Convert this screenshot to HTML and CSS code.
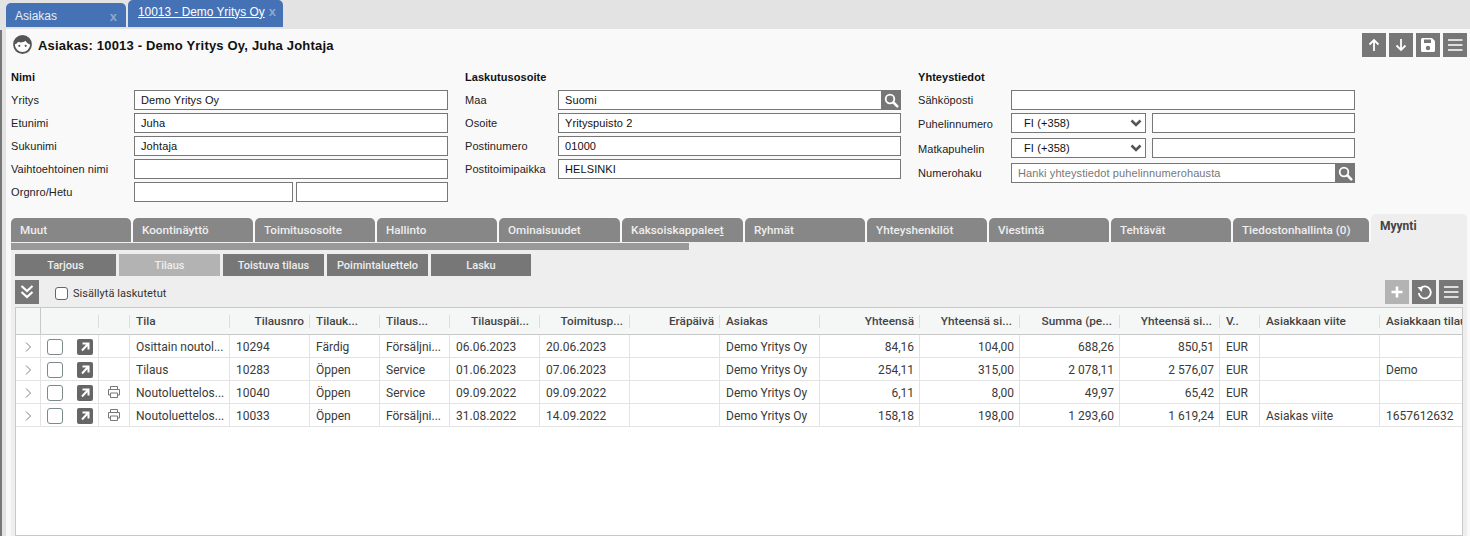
FILE: index.html
```html
<!DOCTYPE html>
<html lang="fi">
<head>
<meta charset="utf-8">
<title>Asiakas</title>
<link rel="stylesheet" href="styles.css">
</head>
<body>
<svg class="defs" width="0" height="0" aria-hidden="true">
  <symbol id="i-search" viewBox="0 0 20 20">
    <circle cx="9" cy="9" r="4.300" fill="none" stroke="#fff" stroke-width="1.800"/>
    <path d="M12.500 12.500l3.800 3.800" stroke="#fff" stroke-width="2.600" stroke-linecap="round"/>
  </symbol>
  <symbol id="i-menu" viewBox="0 0 24 24">
    <path d="M5 7h14.500M5 12h14.500M5 17h14.500" stroke="#fff" stroke-width="1.500" fill="none"/>
  </symbol>
  <symbol id="i-chev" viewBox="0 0 12 8">
    <path d="M1.500 1.500L6 6l4.500-4.500" fill="none" stroke="#555" stroke-width="2.600"/>
  </symbol>
  <symbol id="i-caret" viewBox="0 0 8 12">
    <path d="M2 1.500L6.500 6 2 10.500" fill="none" stroke="#7a8088" stroke-width="1"/>
  </symbol>
  <symbol id="i-open" viewBox="0 0 16 16">
    <rect width="16" height="16" rx="2" fill="#666"/>
    <path d="M5.500 4.500h6v6M11 5l-6 6.500" fill="none" stroke="#fff" stroke-width="2"/>
  </symbol>
  <symbol id="i-print" viewBox="0 0 14 14">
    <path d="M3.500 4.500V1.500h7v3M3.500 10H1.500V4.500h11V10h-2M3.500 8h7v4.500h-7z" fill="none" stroke="#777" stroke-width="1"/>
  </symbol>
</svg>

<nav class="doc-tabs">
  <div class="doc-tab"><span>Asiakas</span><span class="doc-close">x</span></div>
  <div class="doc-tab doc-tab-active"><span class="doc-link">10013 - Demo Yritys Oy</span><span class="doc-close">x</span></div>
</nav>

<div class="shell">
  <main class="main">
    <header class="head">
      <svg class="face" viewBox="0 0 19 19" width="19" height="19">
        <circle cx="9.500" cy="9.500" r="8.500" fill="#fff" stroke="#555" stroke-width="1.800"/>
        <path d="M1.500 9.500C2 3.500 6 1 9.500 1s7.500 2.500 8 8.500C15 9 13.200 7.500 12.700 5.800 10.500 7.800 6 7.800 5 6.800 4.500 8 3 9.200 1.500 9.500z" fill="#555"/>
        <circle cx="6.300" cy="10.800" r="1.100" fill="#555"/>
        <circle cx="12.700" cy="10.800" r="1.100" fill="#555"/>
      </svg>
      <h1 class="title">Asiakas: 10013 - Demo Yritys Oy, Juha Johtaja</h1>
      <div class="head-actions">
        <button class="sq"><svg viewBox="0 0 24 24" width="24" height="24"><path d="M12 18V7M7.500 11.500L12 7l4.500 4.500" fill="none" stroke="#fff" stroke-width="1.800"/></svg></button>
        <button class="sq"><svg viewBox="0 0 24 24" width="24" height="24"><path d="M12 6v11M7.500 12.500L12 17l4.500-4.500" fill="none" stroke="#fff" stroke-width="1.800"/></svg></button>
        <button class="sq"><svg viewBox="0 0 24 24" width="24" height="24"><path fill="#fff" fill-rule="evenodd" d="M6.500 5h9.500l3 3v9.500a1.500 1.500 0 0 1-1.500 1.500h-11A1.500 1.500 0 0 1 5 17.500v-11A1.500 1.500 0 0 1 6.500 5zM8 6.500V10h7V6.500zM12 12.800a2.200 2.200 0 1 0 0 4.400 2.200 2.200 0 0 0 0-4.400z"/></svg></button>
        <button class="sq"><svg width="24" height="24"><use href="#i-menu"/></svg></button>
      </div>
    </header>

    <section class="forms">
      <div class="fcol fcol-name">
        <h2 class="fhead">Nimi</h2>
        <div class="frow"><label>Yritys</label><div class="field">Demo Yritys Oy</div></div>
        <div class="frow"><label>Etunimi</label><div class="field">Juha</div></div>
        <div class="frow"><label>Sukunimi</label><div class="field">Johtaja</div></div>
        <div class="frow"><label>Vaihtoehtoinen nimi</label><div class="field"></div></div>
        <div class="frow"><label>Orgnro/Hetu</label><div class="field-pair pair-org"><div class="field"></div><div class="field"></div></div></div>
      </div>
      <div class="fcol fcol-addr">
        <h2 class="fhead">Laskutusosoite</h2>
        <div class="frow"><label>Maa</label><div class="field field-search"><span class="grow">Suomi</span><span class="search"><svg width="20" height="20"><use href="#i-search"/></svg></span></div></div>
        <div class="frow"><label>Osoite</label><div class="field">Yrityspuisto 2</div></div>
        <div class="frow"><label>Postinumero</label><div class="field">01000</div></div>
        <div class="frow"><label>Postitoimipaikka</label><div class="field">HELSINKI</div></div>
      </div>
      <div class="fcol fcol-contact">
        <h2 class="fhead">Yhteystiedot</h2>
        <div class="frow"><label>Sähköposti</label><div class="field"></div></div>
        <div class="frow frow-tel"><label>Puhelinnumero</label><div class="field-pair pair-tel"><div class="field field-select"><span class="grow">FI (+358)</span><svg width="12" height="8"><use href="#i-chev"/></svg></div><div class="field"></div></div></div>
        <div class="frow frow-wide frow-tel"><label>Matkapuhelin</label><div class="field-pair pair-tel"><div class="field field-select"><span class="grow">FI (+358)</span><svg width="12" height="8"><use href="#i-chev"/></svg></div><div class="field"></div></div></div>
        <div class="frow frow-wide"><label>Numerohaku</label><div class="field field-search field-ph"><span class="grow">Hanki yhteystiedot puhelinnumerohausta</span><span class="search"><svg width="20" height="20"><use href="#i-search"/></svg></span></div></div>
      </div>
    </section>

    <nav class="tabs">
      <div class="tab">Muut</div>
      <div class="tab">Koontinäyttö</div>
      <div class="tab">Toimitusosoite</div>
      <div class="tab">Hallinto</div>
      <div class="tab tab-121">Ominaisuudet</div>
      <div class="tab tab-121">Kaksoiskappalee<u>t</u></div>
      <div class="tab">Ryhmät</div>
      <div class="tab">Yhteyshenkilöt</div>
      <div class="tab">Viestintä</div>
      <div class="tab">Tehtävät</div>
      <div class="tab tab-136">Tiedostonhallinta (0)</div>
      <div class="tab tab-active">Myynti</div>
    </nav>

    <section class="panel">
      <div class="strip"></div>
      <div class="subtabs">
        <div class="subtab">Tarjous</div>
        <div class="subtab subtab-active">Tilaus</div>
        <div class="subtab">Toistuva tilaus</div>
        <div class="subtab">Poimintaluettelo</div>
        <div class="subtab subtab-last">Lasku</div>
      </div>
      <div class="toolbar">
        <button class="sq"><svg viewBox="0 0 24 24" width="24" height="24"><path d="M6.500 6l5.500 5 5.500-5M6.500 12l5.500 5 5.500-5" fill="none" stroke="#fff" stroke-width="2.200"/></svg></button>
        <label class="check"><span class="box"></span>Sisällytä laskutetut</label>
        <div class="toolbar-right">
          <button class="sq sq-off"><svg viewBox="0 0 24 24" width="24" height="24"><path d="M12 6.500v11M6.500 12h11" stroke="#fff" stroke-width="2.600" fill="none"/></svg></button>
          <button class="sq"><svg viewBox="0 0 24 24" width="24" height="24"><path d="M8.500 8.200A6 6 0 1 1 6.800 13" fill="none" stroke="#fff" stroke-width="1.800"/><path d="M5.500 7l5.500 0-1.500 5z" fill="#fff"/></svg></button>
          <button class="sq"><svg width="24" height="24"><use href="#i-menu"/></svg></button>
        </div>
      </div>
      <div class="grid-wrap">
        <table class="grid">
          <colgroup>
            <col class="c25"><col class="c58"><col class="c31"><col class="c100"><col class="c80"><col class="c70"><col class="c70"><col class="c90"><col class="c90"><col class="c90"><col class="c100"><col class="c100"><col class="c100"><col class="c100"><col class="c100"><col class="c40"><col class="c120"><col class="c120">
          </colgroup>
          <thead>
            <tr>
              <th class="th-first"></th><th></th><th></th>
              <th>Tila</th><th class="r">Tilausnro</th><th>Tilauk...</th><th>Tilaus...</th><th class="r pr11">Tilauspäi...</th><th class="r pr7">Toimitusp...</th><th class="r">Eräpäivä</th><th>Asiakas</th><th class="r">Yhteensä</th><th class="r pr8">Yhteensä si...</th><th class="r pr8">Summa (pe...</th><th class="r pr8">Yhteensä si...</th><th>V..</th><th>Asiakkaan viite</th><th class="clip">Asiakkaan tilaus</th>
            </tr>
          </thead>
          <tbody>
            <tr>
              <td class="ic"><svg width="8" height="12"><use href="#i-caret"/></svg></td>
              <td class="cell-acts"><div class="acts"><span class="box box-row"></span><svg width="16" height="16"><use href="#i-open"/></svg></div></td>
              <td class="ic"></td>
              <td>Osittain noutol...</td><td>10294</td><td>Färdig</td><td>Försäljni...</td><td>06.06.2023</td><td>20.06.2023</td><td></td><td>Demo Yritys Oy</td><td class="r">84,16</td><td class="r">104,00</td><td class="r">688,26</td><td class="r">850,51</td><td>EUR</td><td></td><td></td>
            </tr>
            <tr>
              <td class="ic"><svg width="8" height="12"><use href="#i-caret"/></svg></td>
              <td class="cell-acts"><div class="acts"><span class="box box-row"></span><svg width="16" height="16"><use href="#i-open"/></svg></div></td>
              <td class="ic"></td>
              <td>Tilaus</td><td>10283</td><td>Öppen</td><td>Service</td><td>01.06.2023</td><td>07.06.2023</td><td></td><td>Demo Yritys Oy</td><td class="r">254,11</td><td class="r">315,00</td><td class="r">2 078,11</td><td class="r">2 576,07</td><td>EUR</td><td></td><td>Demo</td>
            </tr>
            <tr>
              <td class="ic"><svg width="8" height="12"><use href="#i-caret"/></svg></td>
              <td class="cell-acts"><div class="acts"><span class="box box-row"></span><svg width="16" height="16"><use href="#i-open"/></svg></div></td>
              <td class="ic"><svg width="14" height="14"><use href="#i-print"/></svg></td>
              <td>Noutoluettelos...</td><td>10040</td><td>Öppen</td><td>Service</td><td>09.09.2022</td><td>09.09.2022</td><td></td><td>Demo Yritys Oy</td><td class="r">6,11</td><td class="r">8,00</td><td class="r">49,97</td><td class="r">65,42</td><td>EUR</td><td></td><td></td>
            </tr>
            <tr>
              <td class="ic"><svg width="8" height="12"><use href="#i-caret"/></svg></td>
              <td class="cell-acts"><div class="acts"><span class="box box-row"></span><svg width="16" height="16"><use href="#i-open"/></svg></div></td>
              <td class="ic"><svg width="14" height="14"><use href="#i-print"/></svg></td>
              <td>Noutoluettelos...</td><td>10033</td><td>Öppen</td><td>Försäljni...</td><td>31.08.2022</td><td>14.09.2022</td><td></td><td>Demo Yritys Oy</td><td class="r">158,18</td><td class="r">198,00</td><td class="r">1 293,60</td><td class="r">1 619,24</td><td>EUR</td><td>Asiakas viite</td><td>1657612632</td>
            </tr>
          </tbody>
        </table>
      </div>
    </section>
  </main>
</div>
</body>
</html>
```

FILE: styles.css
```css
* { box-sizing: border-box; }
html, body { height: 100%; }
body {
  margin: 0;
  background: #e3e3e3;
  font-family: "Liberation Sans", Arial, sans-serif;
  font-size: 12px;
  color: #222;
  overflow: hidden;
  display: flex;
  flex-direction: column;
}
.defs { display: block; height: 0; }
h1, h2 { margin: 0; }

/* document tabs */
.doc-tabs {
  height: 29px;
  flex: none;
  display: flex;
  align-items: flex-start;
  gap: 2px;
  padding-left: 6px;
}
.doc-tab {
  width: 120px;
  height: 24px;
  margin-top: 3px;
  padding: 2px 9px 0 9px;
  background: #4472b4;
  border-radius: 5px 5px 0 0;
  color: #e9eef6;
  display: flex;
  align-items: center;
  justify-content: space-between;
  font-size: 12px;
}
.doc-tab-active {
  width: 155px;
  height: 27px;
  margin-top: 0;
  padding: 0 7px 4px 10px;
  color: #fff;
}
.doc-link { text-decoration: underline; font-size: 11.9px; }
.doc-close { color: #8ea8cf; font-weight: bold; font-size: 13px; }

/* shell */
.shell {
  flex: 1;
  min-height: 0;
  display: flex;
  margin-top: 1px;
  border-left: 2px solid #777;
  padding-left: 4px;
}
.main {
  flex: 1;
  margin-top: -1px;
  background: #f9f9f9;
  padding-right: 3px;
  display: flex;
  flex-direction: column;
  min-width: 0;
}

/* header */
.head {
  height: 41px;
  flex: none;
  display: flex;
  align-items: flex-start;
  padding: 4px 0 0 7px;
}
.face { margin-top: 2px; flex: none; }
.title {
  margin: 4px 0 0 6px;
  font-size: 13px;
  line-height: 18px;
  font-weight: bold;
  color: #111;
  letter-spacing: 0.19px;
}
.head-actions { margin-left: auto; display: flex; gap: 3px; }
.sq {
  width: 24px;
  height: 24px;
  padding: 0;
  border: 0;
  background: #777;
  display: block;
  flex: none;
}
.sq svg { display: block; }
.sq-off { background: #b3b3b3; }

/* forms */
.forms {
  height: 144px;
  flex: none;
  display: flex;
  padding-left: 5px;
}
.fcol { flex: none; }
.fcol-name { width: 454px; }
.fcol-addr { width: 453px; }
.fcol-contact { width: 437px; }
.fhead {
  height: 20px;
  font-size: 11px;
  line-height: 14px;
  font-weight: bold;
  color: #111;
  letter-spacing: 0.05px;
}
.frow {
  height: 20px;
  margin-bottom: 3px;
  display: flex;
  align-items: center;
}
.frow-wide { margin-top: 5px; }
.frow label { flex: none; color: #222; font-size: 11px; letter-spacing: 0.08px; }
.frow-tel label { padding-top: 2px; }
.fcol-name .frow label { width: 123px; }
.fcol-name .frow > .field, .fcol-name .field-pair { width: 314px; }
.fcol-addr .frow label { width: 93px; }
.fcol-addr .frow > .field { width: 343px; }
.fcol-contact .frow label { width: 93px; }
.fcol-contact .frow > .field, .fcol-contact .field-pair { width: 344px; }
.field {
  height: 20px;
  border: 1px solid #777;
  background: #fff;
  padding: 0 6px;
  line-height: 18px;
  font-size: 11px;
  letter-spacing: 0.1px;
  color: #111;
  display: flex;
  align-items: center;
  min-width: 0;
}
.field-pair { display: flex; justify-content: space-between; }
.pair-org .field:first-child { width: 159px; }
.pair-org .field:last-child { width: 152px; }
.pair-tel .field:first-child { width: 135px; }
.pair-tel .field:last-child { width: 203px; }
.grow { flex: 1; min-width: 0; }
.field-search { padding-right: 0; border-right: 0; }
.field-ph { color: #777; }
.search {
  width: 20px;
  height: 20px;
  margin: -1px 0;
  background: #777;
  flex: none;
  display: block;
}
.search svg { display: block; }
.field-select { padding: 0 3px 0 12px; }

/* tabs */
.tabs {
  height: 28px;
  flex: none;
  display: flex;
  align-items: flex-end;
  gap: 2px;
  padding-left: 5px;
}
.tab {
  width: 120px;
  height: 24px;
  padding-left: 9px;
  background: #878787;
  border-radius: 5px 5px 0 0;
  color: #eee;
  font-family: Roboto, "Liberation Sans", sans-serif;
  font-size: 11.7px;
  font-weight: 500;
  line-height: 25px;
  white-space: nowrap;
}
.tab-121 { width: 121px; }
.tab-136 { width: 136px; }
.tab-active {
  width: 96px;
  height: 28px;
  background: #eee;
  color: #444;
  font-size: 12px;
  font-weight: 700;
  line-height: 24px;
}

/* panel */
.panel {
  flex: 1;
  min-height: 0;
  margin-left: 5px;
  padding: 1px 4px 0;
  background: #eee;
  display: flex;
  flex-direction: column;
}
.strip {
  width: 678px;
  height: 7px;
  margin-left: -4px;
  background: #999;
  flex: none;
}
.subtabs {
  display: flex;
  gap: 3px;
  margin-top: 4px;
  flex: none;
}
.subtab {
  width: 101px;
  height: 22px;
  background: #777;
  color: #eee;
  font-family: Roboto, "Liberation Sans", sans-serif;
  font-size: 11px;
  font-weight: 500;
  line-height: 23px;
  text-align: center;
}
.subtab-active { background: #b3b3b3; }
.subtab-last { width: 100px; }
.toolbar {
  height: 24px;
  margin-top: 4px;
  flex: none;
  display: flex;
  align-items: center;
}
.check {
  margin-left: 16px;
  padding-top: 3px;
  display: flex;
  align-items: center;
  gap: 5px;
  font-family: Roboto, "Liberation Sans", sans-serif;
  font-size: 11px;
  letter-spacing: 0.05px;
  color: #333;
}
.box {
  display: block;
  width: 13px;
  height: 13px;
  border: 1px solid #666;
  border-radius: 3px;
  background: #fff;
  flex: none;
}
.toolbar-right { margin-left: auto; display: flex; gap: 3px; }

/* grid */
.grid-wrap {
  flex: 1;
  min-height: 0;
  margin-top: 3px;
  background: #fff;
  border: 1px solid #c8c8c8;
  overflow: hidden;
}
.grid {
  width: 1484px;
  table-layout: fixed;
  border-collapse: separate;
  border-spacing: 0;
  font-family: Roboto, "Liberation Sans", sans-serif;
  font-size: 12px;
  color: #3a3a3a;
}
.c25 { width: 25px; }
.c31 { width: 31px; }
.c40 { width: 40px; }
.c58 { width: 58px; }
.c70 { width: 70px; }
.c80 { width: 80px; }
.c90 { width: 90px; }
.c100 { width: 100px; }
.c120 { width: 120px; }
.grid th {
  height: 27px;
  padding: 0 6px;
  background: #f5f7f7 linear-gradient(#ddd, #ddd) right center / 1px 13px no-repeat;
  border-bottom: 1px solid #c8c8c8;
  text-align: left;
  font-size: 11.8px;
  font-weight: 500;
  color: #444;
  white-space: nowrap;
  overflow: hidden;
}
.grid .th-first { background: #f5f7f7; border-right: 1px solid #c8c8c8; }
.grid th.r { text-align: right; }
.grid th.pr7 { padding-right: 7px; }
.grid th.pr8 { padding-right: 8px; }
.grid th.pr11 { padding-right: 11px; }
.grid th.clip { padding-right: 0; }
.grid td {
  height: 23px;
  padding: 1px 6px 0;
  border-right: 1px solid #e3e3e3;
  border-bottom: 1px solid #e3e3e3;
  white-space: nowrap;
  overflow: hidden;
}
.grid td.r { text-align: right; padding-right: 5px; }
.grid td.ic { padding: 0; text-align: center; }
.grid td svg { display: inline-block; vertical-align: middle; }
.grid td.cell-acts { padding: 2px 0 0; }
.acts {
  display: flex;
  align-items: center;
  justify-content: space-between;
  padding: 0 5px 0 6px;
}
.box-row { width: 16px; height: 16px; border-color: #7d8a8a; }
```
